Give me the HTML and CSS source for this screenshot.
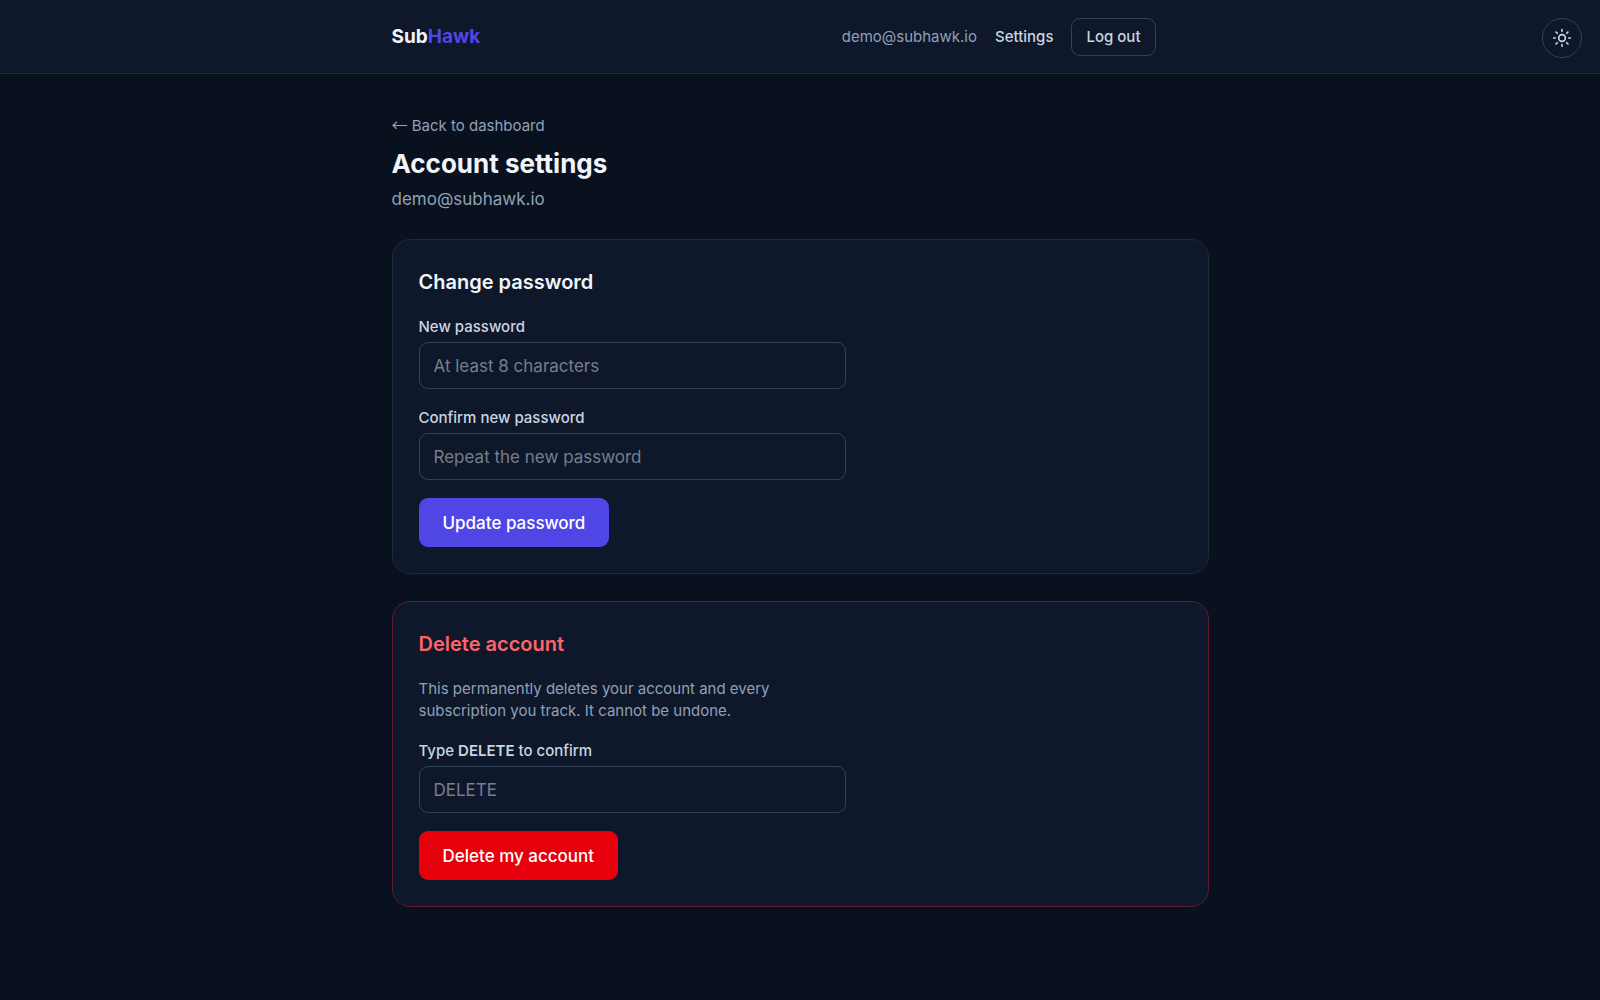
FILE: index.html
```html
<!DOCTYPE html>
<html lang="en">
<head>
<meta charset="utf-8">
<meta name="viewport" content="width=device-width, initial-scale=1">
<title>Account settings – SubHawk</title>
<link rel="stylesheet" href="styles.css">
</head>
<body>
<header class="site-header">
  <div class="container site-header__inner">
    <a class="logo" href="#">Sub<span class="logo__accent">Hawk</span></a>
    <nav class="nav">
      <span class="nav__email">demo@subhawk.io</span>
      <a class="nav__link" href="#">Settings</a>
      <button class="nav__logout" type="button">Log out</button>
    </nav>
  </div>
  <button class="theme-toggle" type="button" aria-label="Toggle theme">
    <svg width="20" height="20" viewBox="0 0 24 24" fill="none" stroke="currentColor" stroke-width="2" stroke-linecap="round" stroke-linejoin="round" aria-hidden="true">
      <circle cx="12" cy="12" r="4"/>
      <path d="M12 2v2M12 20v2M4.93 4.93l1.41 1.41M17.66 17.66l1.41 1.41M2 12h2M20 12h2M6.34 17.66l-1.41 1.41M19.07 4.93l-1.41 1.41"/>
    </svg>
  </button>
</header>
<main class="container main">
  <div class="intro">
    <a class="back" href="#"><span class="back__arrow">←</span> Back to dashboard</a>
    <h1 class="intro__title">Account settings</h1>
    <p class="intro__email">demo@subhawk.io</p>
  </div>
  <section class="card">
    <h2 class="card__title">Change password</h2>
    <form class="form">
      <div class="field">
        <label class="field__label" for="new-password">New password</label>
        <input class="field__input" id="new-password" type="password" placeholder="At least 8 characters">
      </div>
      <div class="field">
        <label class="field__label" for="confirm-password">Confirm new password</label>
        <input class="field__input" id="confirm-password" type="password" placeholder="Repeat the new password">
      </div>
      <button class="button" type="submit">Update password</button>
    </form>
  </section>
  <section class="card card--danger">
    <h2 class="card__title card__title--danger">Delete account</h2>
    <form class="form">
      <p class="form__note">This permanently deletes your account and every subscription you track. It cannot be undone.</p>
      <div class="field">
        <label class="field__label" for="confirm-delete">Type <strong class="field__word">DELETE</strong> to confirm</label>
        <input class="field__input" id="confirm-delete" type="text" placeholder="DELETE">
      </div>
      <button class="button button--danger" type="submit">Delete my account</button>
    </form>
  </section>
</main>
</body>
</html>
```
FILE: styles.css
```css
* { box-sizing: border-box; }

body {
  margin: 0;
  min-height: 100vh;
  background: #0a111e;
  color: #f1f5f9;
  font-family: Inter, "Liberation Sans", sans-serif;
  font-size: 17px;
  line-height: 26px;
}

h1, h2, p { margin: 0; }
a { color: inherit; text-decoration: none; }
button, input { font: inherit; }
button { cursor: pointer; }

.container {
  width: 100%;
  max-width: 817px;
  margin: 0 auto;
}

.site-header {
  position: relative;
  padding: 18px 0 17px;
  background: #0f172a;
  border-bottom: 1px solid #1d293d;
}
.site-header__inner {
  display: flex;
  align-items: center;
  justify-content: space-between;
  padding-right: 53px;
}
.logo {
  font-size: 19px;
  font-weight: 700;
}
.logo__accent { color: #4f46e5; }
.nav {
  display: flex;
  align-items: center;
  gap: 18px;
  font-size: 15px;
  line-height: 22px;
}
.nav__email { color: #90a1b9; }
.nav__link {
  color: #cad5e2;
  font-weight: 500;
}
.nav__logout {
  padding: 7px 14px;
  border: 1px solid #314158;
  border-radius: 9px;
  background: transparent;
  color: #cad5e2;
  font-weight: 500;
}
.theme-toggle {
  position: absolute;
  top: 18px;
  right: 18px;
  display: grid;
  place-items: center;
  width: 40px;
  height: 40px;
  padding: 0;
  border: 1px solid #314158;
  border-radius: 50%;
  background: transparent;
  color: #cad5e2;
}

.main {
  display: flex;
  flex-direction: column;
  gap: 27px;
  padding: 38px 0;
}
.intro {
  display: flex;
  flex-direction: column;
  align-items: flex-start;
}
.back {
  height: 24px;
  margin-bottom: 10px;
  color: #90a1b9;
  font-size: 15px;
  line-height: 24px;
}
.back__arrow {
  font-family: "Noto Sans CJK JP", sans-serif;
  font-size: 16px;
}
.intro__title {
  margin-bottom: 4px;
  font-size: 26px;
  line-height: 36px;
  font-weight: 700;
}
.intro__email { color: #90a1b9; }

.card {
  padding: 26px;
  background: #0f172a;
  border: 1px solid #1d293d;
  border-radius: 18px;
}
.card--danger { border-color: #631c2f; }
.card__title {
  margin-bottom: 18px;
  font-size: 20px;
  line-height: 32px;
  font-weight: 600;
}
.card__title--danger { color: #ff6467; }

.form {
  display: flex;
  flex-direction: column;
  align-items: flex-start;
  gap: 18px;
  max-width: 427px;
}
.form__note {
  max-width: 380px;
  color: #90a1b9;
  font-size: 15px;
  line-height: 22px;
}
.field {
  display: flex;
  flex-direction: column;
  gap: 4px;
  width: 100%;
}
.field__label {
  color: #cad5e2;
  font-size: 15px;
  line-height: 22px;
  font-weight: 500;
}
.field__word { font-weight: 600; }
.field__input {
  width: 100%;
  height: 47px;
  padding: 0 14px;
  border: 1px solid #314158;
  border-radius: 9px;
  background: transparent;
  color: #f1f5f9;
}
.field__input::placeholder { color: #757f90; }

.button {
  height: 49px;
  padding: 0 24px;
  border: 0;
  border-radius: 9px;
  background: #4f46e5;
  color: #fff;
  font-weight: 500;
}
.button--danger { background: #e7000b; }
```
